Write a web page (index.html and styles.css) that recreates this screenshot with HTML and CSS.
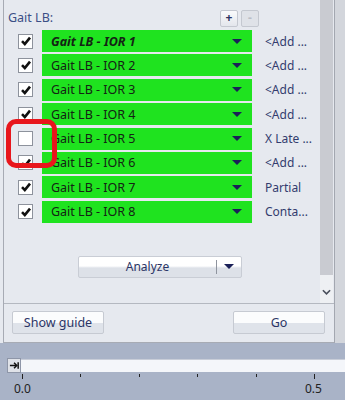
FILE: index.html
```html
<!DOCTYPE html>
<html lang="en">
<head>
  <meta charset="UTF-8">
  <title>Gait LB</title>
  <link rel="stylesheet" href="styles.css">
</head>
<body>
  <div class="app">
    <div class="main">
      <div class="frame">
        <div class="scrollarea">
          <div class="content">
            <!-- header -->
            <div class="header">
              <span class="heading">Gait LB:</span>
              <div class="tools">
                <span class="tool">+</span>
                <span class="tool off">-</span>
              </div>
            </div>

            <!-- trial rows -->
            <div class="rows">
              <div class="row">
                <span class="check on"><svg viewBox="0 0 12 12"><path d="M2 6.2 L4.8 9 L10 2.6"/></svg></span>
                <div class="select"><span class="name bold">Gait LB - IOR 1</span><span class="caret"></span></div>
                <span class="note">&lt;Add ...</span>
              </div>
              <div class="row">
                <span class="check on"><svg viewBox="0 0 12 12"><path d="M2 6.2 L4.8 9 L10 2.6"/></svg></span>
                <div class="select"><span class="name">Gait LB - IOR 2</span><span class="caret"></span></div>
                <span class="note">&lt;Add ...</span>
              </div>
              <div class="row">
                <span class="check on"><svg viewBox="0 0 12 12"><path d="M2 6.2 L4.8 9 L10 2.6"/></svg></span>
                <div class="select"><span class="name">Gait LB - IOR 3</span><span class="caret"></span></div>
                <span class="note">&lt;Add ...</span>
              </div>
              <div class="row">
                <span class="check on"><svg viewBox="0 0 12 12"><path d="M2 6.2 L4.8 9 L10 2.6"/></svg></span>
                <div class="select"><span class="name">Gait LB - IOR 4</span><span class="caret"></span></div>
                <span class="note">&lt;Add ...</span>
              </div>
              <div class="row marked">
                <span class="check"></span>
                <div class="select"><span class="name">Gait LB - IOR 5</span><span class="caret"></span></div>
                <span class="note">X Late ...</span>
              </div>
              <div class="row">
                <span class="check on"><svg viewBox="0 0 12 12"><path d="M2 6.2 L4.8 9 L10 2.6"/></svg></span>
                <div class="select"><span class="name">Gait LB - IOR 6</span><span class="caret"></span></div>
                <span class="note">&lt;Add ...</span>
              </div>
              <div class="row">
                <span class="check on"><svg viewBox="0 0 12 12"><path d="M2 6.2 L4.8 9 L10 2.6"/></svg></span>
                <div class="select"><span class="name">Gait LB - IOR 7</span><span class="caret"></span></div>
                <span class="note">Partial</span>
              </div>
              <div class="row">
                <span class="check on"><svg viewBox="0 0 12 12"><path d="M2 6.2 L4.8 9 L10 2.6"/></svg></span>
                <div class="select"><span class="name">Gait LB - IOR 8</span><span class="caret"></span></div>
                <span class="note">Conta...</span>
              </div>
            </div>

            <div class="analyze">
              <span class="analyze-label">Analyze</span>
              <span class="analyze-drop"><span class="caret"></span></span>
            </div>
          </div>

          <div class="scrollbar">
            <div class="thumb"></div>
            <div class="track">
              <svg viewBox="0 0 10 6"><path d="M1 1 L5 5 L9 1"/></svg>
            </div>
          </div>
        </div>

        <div class="footer">
          <span class="button guide">Show guide</span>
          <span class="button go">Go</span>
        </div>
      </div>
      <div class="edge"></div>
    </div>

    <!-- time slider -->
    <div class="timeline">
      <div class="slider">
        <span class="handle"><svg viewBox="0 0 12 12"><path d="M1 6 H8 M5.5 3 L8.5 6 L5.5 9" /><path d="M10 2.5 V9.5"/></svg></span>
        <div class="bar"></div>
      </div>
      <div class="ticks">
        <span class="tick major"></span>
        <span class="tick"></span>
        <span class="tick"></span>
        <span class="tick"></span>
        <span class="tick"></span>
        <span class="tick major"></span>
      </div>
      <div class="scale">
        <span>0.0</span>
        <span>0.5</span>
      </div>
    </div>
  </div>
</body>
</html>
```

FILE: styles.css
```css
* {
  margin: 0;
  padding: 0;
  box-sizing: border-box;
}

body {
  width: 345px;
  height: 400px;
  overflow: hidden;
  font-family: 'Noto Sans', 'Open Sans', sans-serif;
  font-size: 12px;
  background: #e6e9ef;
}

.app {
  display: flex;
  flex-direction: column;
  height: 400px;
}

.main {
  height: 343px;
  display: flex;
  background: #e6e9ef;
}

.frame {
  width: 331px;
  margin-left: 3px;
  border-left: 1px solid #a7abb4;
  border-bottom: 1px solid #a7abb4;
  display: flex;
  flex-direction: column;
}

.scrollarea {
  height: 304px;
  display: flex;
  border-bottom: 1px solid #b4b8c0;
}

.content {
  flex: 1;
  position: relative;
}

.header {
  height: 30px;
  display: flex;
  align-items: center;
  justify-content: space-between;
  padding: 4px 61px 0 4px;
}

.heading {
  color: #3b4f86;
  font-size: 12.5px;
}

.tools {
  display: flex;
  gap: 3px;
  margin-top: 2px;
}

.tool {
  width: 18px;
  height: 17px;
  display: flex;
  align-items: center;
  justify-content: center;
  border: 1px solid #c4c8d0;
  border-radius: 2px;
  background: linear-gradient(#fafbfc, #e3e6ec);
  color: #2a3260;
  font-size: 12px;
  font-weight: bold;
  line-height: 1;
}

.tool.off {
  color: #b9bdc6;
  background: #dfe2e8;
}

.rows {
  display: flex;
  flex-direction: column;
  gap: 2.4px;
}

.row {
  height: 22px;
  display: flex;
  align-items: center;
  padding-left: 14px;
}

.check {
  width: 15px;
  height: 15px;
  border: 1px solid #8d929c;
  background: #fff;
  display: flex;
  align-items: center;
  justify-content: center;
}

.check svg {
  width: 12px;
  height: 12px;
  fill: none;
  stroke: #111;
  stroke-width: 2.6;
}

.select {
  width: 210px;
  height: 22px;
  margin-left: 9px;
  background: #1fe31f;
  display: flex;
  align-items: center;
  justify-content: space-between;
  padding: 0 10px 0 9px;
}

.name {
  color: #142414;
  font-size: 12.5px;
}

.name.bold {
  font-weight: bold;
  font-style: italic;
}

.caret {
  width: 0;
  height: 0;
  border-left: 5px solid transparent;
  border-right: 5px solid transparent;
  border-top: 5px solid #1a2058;
}

.note {
  margin-left: 13px;
  color: #333c6e;
  font-size: 12px;
  white-space: nowrap;
}

/* annotation drawn on top of row 5 */
.marked {
  position: relative;
}

.marked::before {
  content: '';
  position: absolute;
  left: 2px;
  top: -9px;
  width: 41px;
  height: 39px;
  border: 5px solid #e8161c;
  border-radius: 10px;
}

.analyze {
  margin: 33px 0 0 74px;
  width: 164px;
  height: 22px;
  display: flex;
  border: 1px solid #c9cdd5;
  border-radius: 2px;
  background: linear-gradient(#ffffff 45%, #dde1e8 55%);
  color: #2b3566;
}

.analyze-label {
  flex: 1;
  display: flex;
  align-items: center;
  justify-content: center;
  font-size: 12px;
}

.analyze-drop {
  width: 25px;
  display: flex;
  align-items: center;
  justify-content: center;
  border-left: 1px solid #8f949e;
  margin: 3px 0;
}

.scrollbar {
  width: 13px;
  margin-right: 1px;
  display: flex;
  flex-direction: column;
}

.thumb {
  height: 275px;
  background: #c9cbd1;
}

.track {
  flex: 1;
  background: #eef0f3;
  display: flex;
  align-items: flex-end;
  justify-content: center;
  padding-bottom: 8px;
}

.track svg {
  width: 9px;
  height: 6px;
  fill: none;
  stroke: #4a4f5c;
  stroke-width: 1.8;
}

.footer {
  flex: 1;
  display: flex;
  justify-content: space-between;
  align-items: flex-start;
  padding: 7px 9px 0 8px;
}

.button {
  height: 23px;
  display: flex;
  align-items: center;
  justify-content: center;
  border: 1px solid #c6cad2;
  border-radius: 2px;
  background: linear-gradient(#fbfcfd 50%, #dfe3ea 50%);
  color: #2b3566;
  font-size: 12.5px;
}

.guide {
  width: 92px;
}

.go {
  width: 92px;
}

.edge {
  flex: 1;
  border-left: 1px solid #a3a7b0;
  background: #d3d6dc;
}

.timeline {
  flex: 1;
  background: #a9b3c7;
  padding: 15px 0 0 7px;
}

.slider {
  display: flex;
  align-items: center;
  height: 15px;
}

.handle {
  width: 14px;
  height: 15px;
  background: #dfe2e8;
  border: 1px solid #8e96a8;
  display: flex;
  align-items: center;
  justify-content: center;
}

.handle svg {
  width: 11px;
  height: 11px;
  fill: none;
  stroke: #111;
  stroke-width: 1.6;
}

.bar {
  flex: 1;
  height: 13px;
  background: #f4f6fa;
  border-top: 1px solid #c8cdd8;
}

.ticks {
  display: flex;
  gap: 57.4px;
  padding-left: 15px;
  height: 7px;
}

.tick {
  width: 1px;
  height: 3px;
  background: #222;
  margin-top: 1px;
}

.tick.major {
  height: 5px;
}

.scale {
  display: flex;
  gap: 274px;
  padding-left: 7px;
  color: #222;
  font-size: 12px;
}
```
